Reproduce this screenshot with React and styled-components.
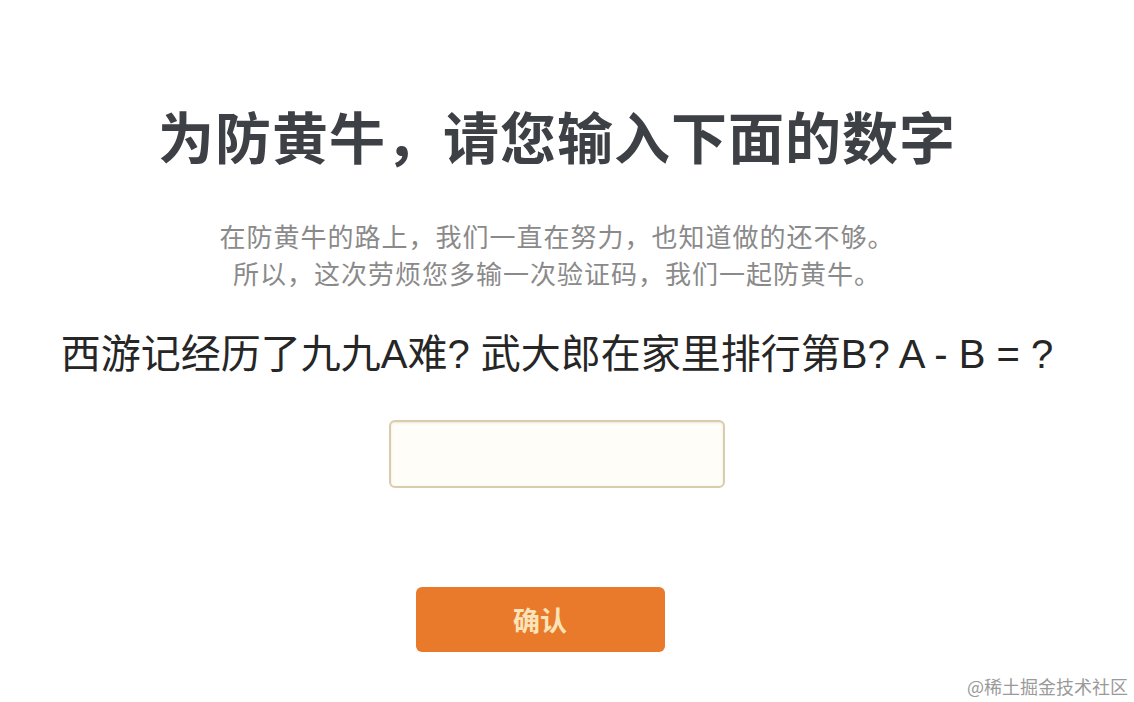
import React from 'react';
import styled, { createGlobalStyle } from 'styled-components';

const GlobalStyle = createGlobalStyle`
  html, body {
    margin: 0;
    padding: 0;
    background: #fff;
  }
  body {
    font-family: "Liberation Sans", "Noto Sans CJK SC", sans-serif;
  }
`;

const Page = styled.div`
  position: relative;
  width: 1134px;
  height: 702px;
  box-sizing: border-box;
  padding: 103px 20px 0 0;
  display: flex;
  flex-direction: column;
  align-items: center;
  overflow: hidden;
`;

const Title = styled.h1`
  margin: 0;
  font-family: "Noto Sans CJK SC", sans-serif;
  font-size: 56px;
  line-height: 64px;
  font-weight: 700;
  color: #3d4044;
  letter-spacing: 1px;
`;

const Intro = styled.div`
  margin-top: 50px;
  font-family: "Noto Sans CJK SC", sans-serif;
  font-size: 26px;
  line-height: 37px;
  color: #8a8a8a;
  text-align: center;
  letter-spacing: 1px;
`;

const Question = styled.p`
  margin: 39px 0 0;
  font-family: "Liberation Sans", "Noto Sans CJK SC", sans-serif;
  font-size: 40px;
  line-height: 48px;
  color: #262626;
  white-space: nowrap;
`;

const AnswerInput = styled.input`
  margin-top: 42px;
  width: 336px;
  height: 68px;
  box-sizing: border-box;
  border: 2px solid #d9ccaa;
  border-radius: 6px;
  background: #fffdf7;
  box-shadow: inset 0 1px 2px rgba(120, 100, 60, 0.15);
  outline: none;
  font-size: 28px;
  padding: 0 14px;
`;

const ConfirmButton = styled.button`
  margin-top: 99px;
  margin-right: 34px;
  width: 249px;
  height: 65px;
  border: none;
  border-radius: 6px;
  background: #e97a2c;
  color: #fbe3b8;
  font-family: "Noto Sans CJK SC", sans-serif;
  font-size: 27px;
  font-weight: 700;
  cursor: pointer;
`;

const Watermark = styled.span`
  position: absolute;
  right: 6px;
  bottom: 5px;
  font-family: "Noto Sans CJK SC", sans-serif;
  font-size: 18px;
  line-height: 22px;
  color: #9a9a9a;
`;

export default function App() {
  return (
    <>
      <GlobalStyle />
      <Page>
        <Title>为防黄牛，请您输入下面的数字</Title>
        <Intro>
          在防黄牛的路上，我们一直在努力，也知道做的还不够。
          <br />
          所以，这次劳烦您多输一次验证码，我们一起防黄牛。
        </Intro>
        <Question>西游记经历了九九A难? 武大郎在家里排行第B? A - B = ?</Question>
        <AnswerInput type="text" />
        <ConfirmButton>确认</ConfirmButton>
        <Watermark>@稀土掘金技术社区</Watermark>
      </Page>
    </>
  );
}
